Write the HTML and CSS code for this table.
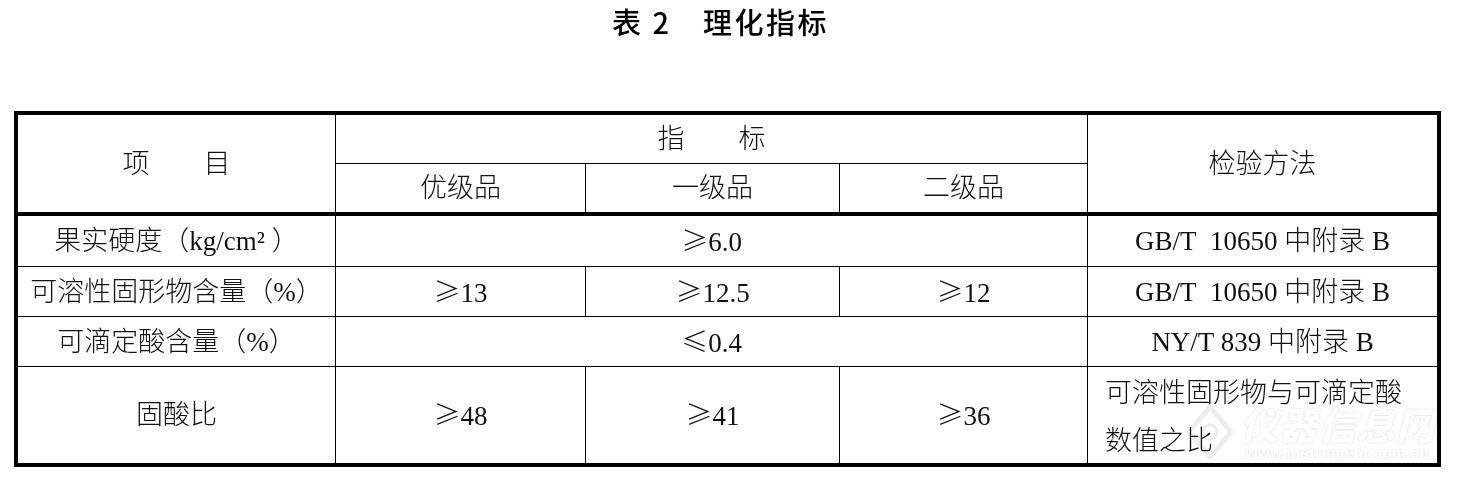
FILE: index.html
```html
<!DOCTYPE html>
<html lang="zh-CN">
<head>
<meta charset="utf-8">
<title>表 2 理化指标</title>
<link rel="stylesheet" href="styles.css">
</head>
<body>
<div class="page">
  <h1 class="title">表 2　理化指标</h1>
  <table class="spec">
    <colgroup>
      <col class="c-item">
      <col class="c-g1">
      <col class="c-g2">
      <col class="c-g3">
      <col class="c-method">
    </colgroup>
    <thead>
      <tr class="r-h1">
        <th rowspan="2" class="thick">项　　目</th>
        <th colspan="3">指　　标</th>
        <th rowspan="2" class="thick last">检验方法</th>
      </tr>
      <tr class="r-h2">
        <th class="thick">优级品</th>
        <th class="thick">一级品</th>
        <th class="thick">二级品</th>
      </tr>
    </thead>
    <tbody>
      <tr class="r-d1">
        <td>果实硬度（kg/cm² ）</td>
        <td colspan="3"><span class="sym">≥</span>6.0</td>
        <td class="last">GB/T&nbsp;&nbsp;10650 中附录 B</td>
      </tr>
      <tr class="r-d">
        <td>可溶性固形物含量（%）</td>
        <td><span class="sym">≥</span>13</td>
        <td><span class="sym">≥</span>12.5</td>
        <td><span class="sym">≥</span>12</td>
        <td class="last">GB/T&nbsp;&nbsp;10650 中附录 B</td>
      </tr>
      <tr class="r-d">
        <td>可滴定酸含量（%）</td>
        <td colspan="3"><span class="sym">≤</span>0.4</td>
        <td class="last">NY/T 839 中附录 B</td>
      </tr>
      <tr class="r-d4">
        <td class="end">固酸比</td>
        <td class="end"><span class="sym">≥</span>48</td>
        <td class="end"><span class="sym">≥</span>41</td>
        <td class="end"><span class="sym">≥</span>36</td>
        <td class="end last note">可溶性固形物与可滴定酸数值之比</td>
      </tr>
    </tbody>
  </table>
  <div class="watermark" aria-hidden="true">
    <svg class="wm-logo" width="52" height="60" viewBox="0 0 52 60">
      <path d="M26 5 L47 30 L26 55 L5 30 Z" fill="none" stroke="#ececec" stroke-width="5" stroke-linejoin="round"/>
      <circle cx="26" cy="30" r="7" fill="none" stroke="#ececec" stroke-width="3"/>
    </svg>
    <div class="wm-text">
      <div class="wm-name">仪器信息网</div>
      <div class="wm-url">www.instrument.com.cn</div>
    </div>
  </div>
</div>
</body>
</html>
```
FILE: styles.css
```css
html, body {
  margin: 0;
  padding: 0;
  background: #ffffff;
}

.page {
  position: relative;
  width: 1461px;
  height: 488px;
  padding-left: 14px;
  box-sizing: border-box;
  color: #000;
}

.title {
  width: 1427px;
  height: 111px;
  margin: 0;
  padding: 0 14px 0 0;
  box-sizing: border-box;
  text-align: center;
  font-family: "Noto Sans CJK SC", sans-serif;
  font-weight: 500;
  font-size: 29px;
  line-height: 42px;
  letter-spacing: 2.5px;
  color: #000;
}

.spec {
  width: 1427px;
  table-layout: fixed;
  border-collapse: separate;
  border-spacing: 0;
  border: 4px solid #000;
  font-family: "Liberation Serif", "Noto Sans CJK SC", serif;
  font-size: 27px;
  font-weight: 300;
  color: #111;
}

.c-item { width: 318px; }
.c-g1 { width: 250px; }
.c-g2 { width: 254px; }
.c-g3 { width: 248px; }
.c-method { width: 349px; }

.spec th,
.spec td {
  padding: 0;
  text-align: center;
  vertical-align: middle;
  font-weight: 300;
  border-right: 1px solid #000;
  border-bottom: 1px solid #000;
  box-sizing: border-box;
  line-height: 30px;
  white-space: nowrap;
}

.spec .thick { border-bottom: 4px solid #000; }
.spec .last { border-right: 0; }
.spec .end { border-bottom: 0; }

.r-h1 { height: 49px; }
.r-h2 { height: 52px; }
.r-d1 { height: 51px; }
.r-d { height: 50px; }
.r-d4 { height: 95px; }

.sym {
  font-family: "Noto Sans CJK SC", sans-serif;
}

.spec td.note {
  text-align: left;
  white-space: normal;
  padding: 0 30px 0 17px;
  line-height: 48px;
  font-family: "Noto Sans CJK SC", sans-serif;
}

.watermark {
  position: absolute;
  left: 1184px;
  top: 402px;
  display: flex;
  align-items: center;
  gap: 4px;
  pointer-events: none;
  mix-blend-mode: darken;
}

.wm-text {
  display: flex;
  flex-direction: column;
  align-items: center;
}

.wm-name {
  font-family: "Noto Sans CJK SC", sans-serif;
  font-weight: 900;
  font-style: italic;
  font-size: 38px;
  line-height: 42px;
  letter-spacing: 1px;
  color: #ffffff;
  text-shadow: 0 0 2px rgba(170, 170, 170, 0.5);
}

.wm-url {
  font-family: "Liberation Sans", sans-serif;
  font-weight: 700;
  font-size: 15px;
  line-height: 16px;
  letter-spacing: 0.5px;
  color: #ffffff;
  text-shadow: 0 0 2px rgba(170, 170, 170, 0.5);
}
```
